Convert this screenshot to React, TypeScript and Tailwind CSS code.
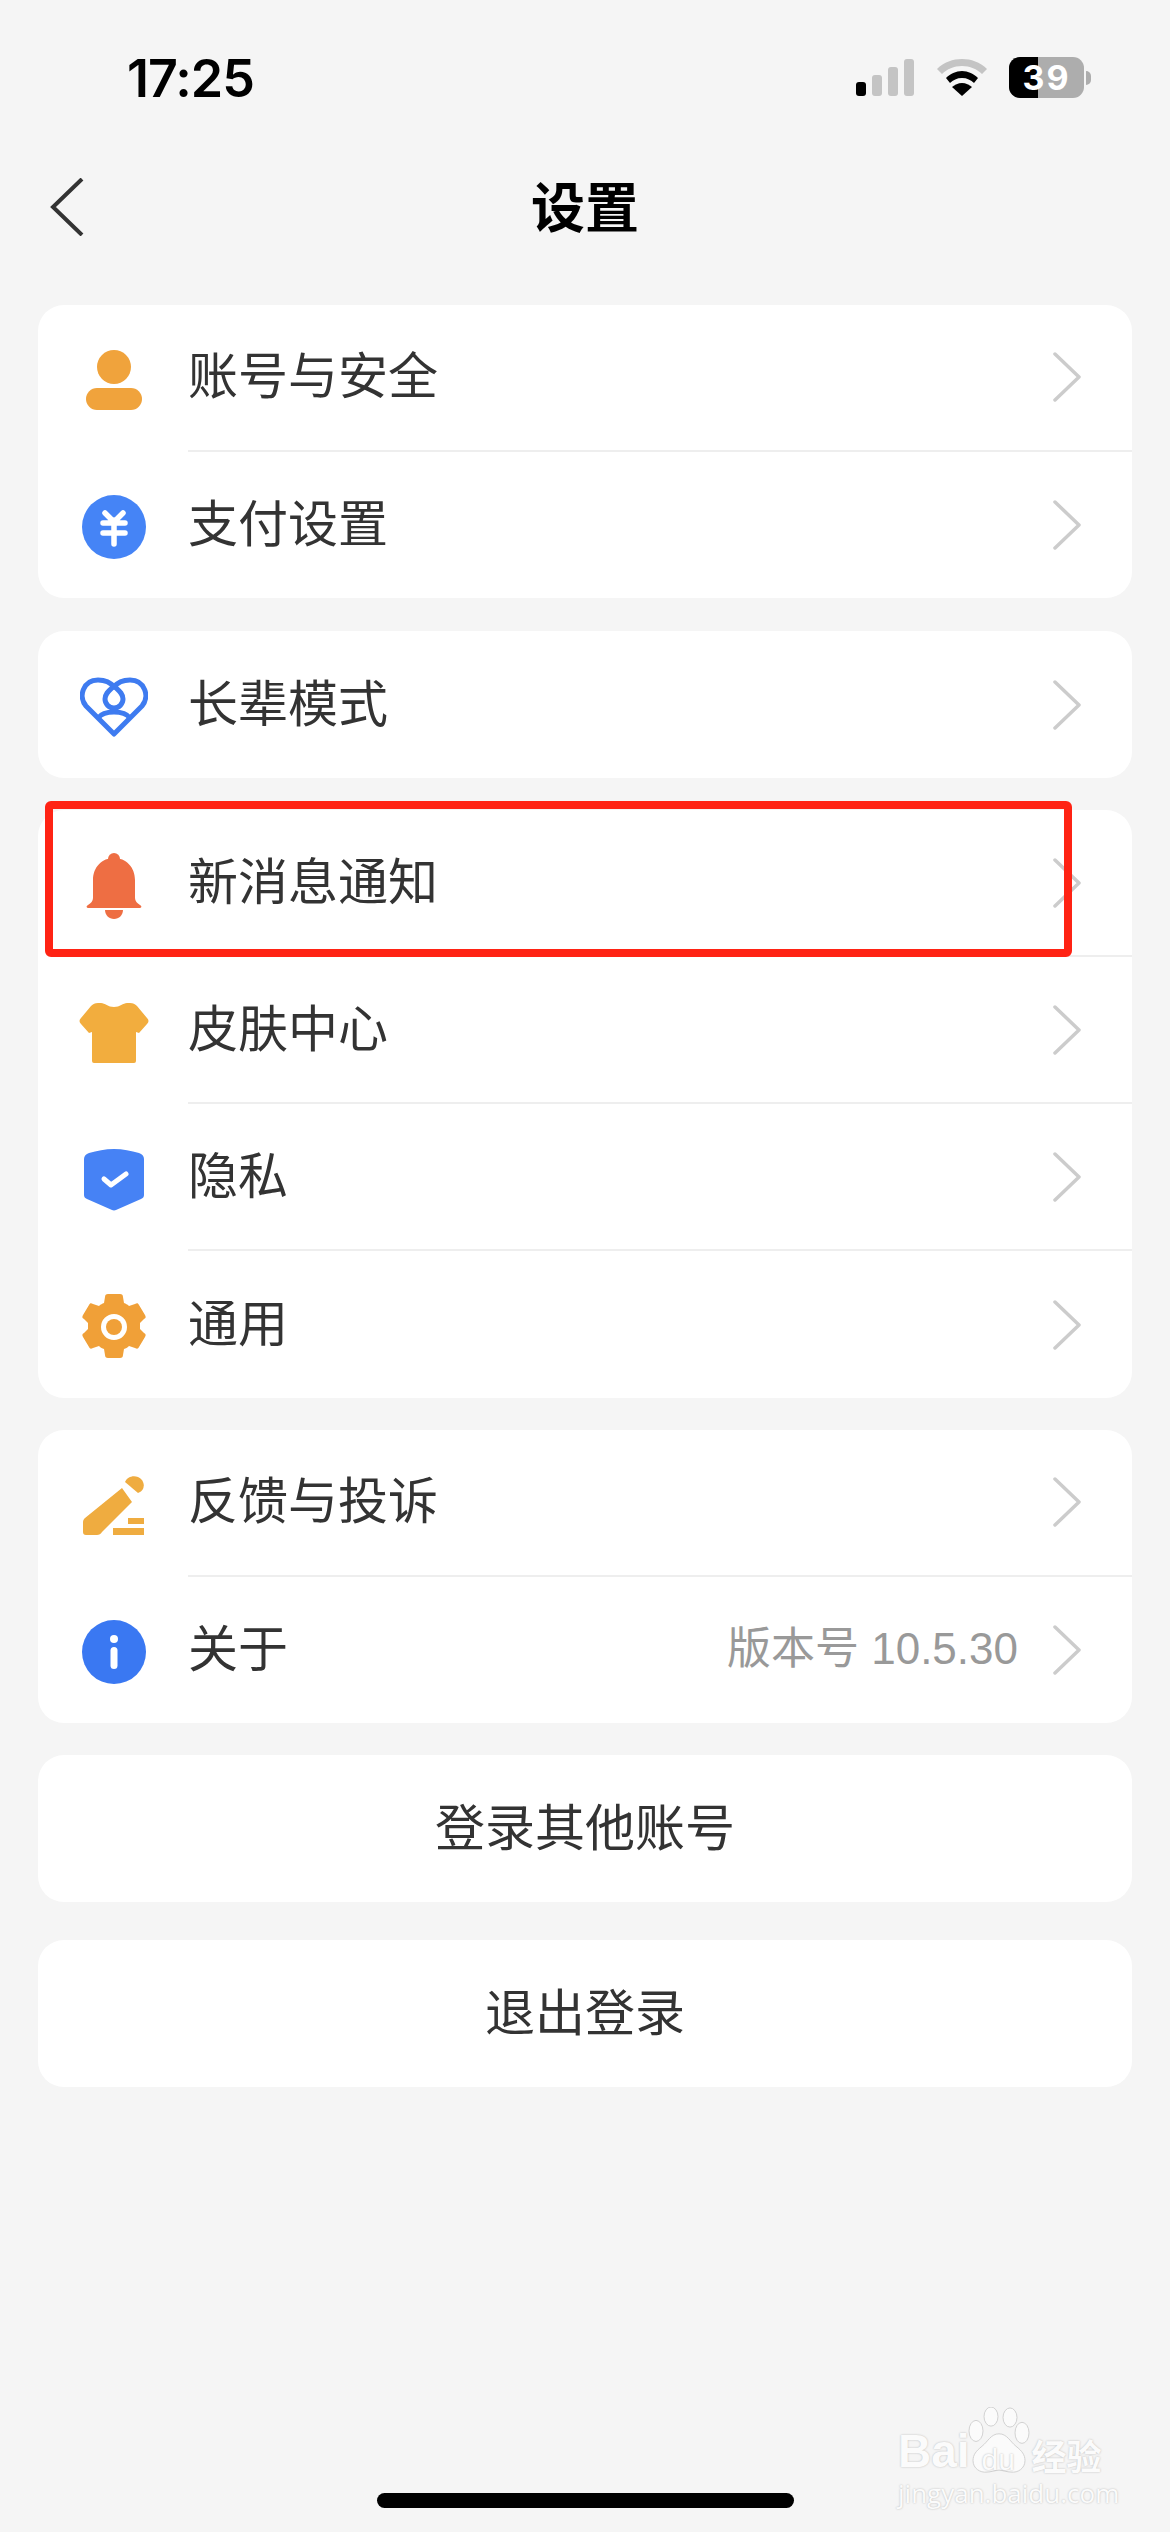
import type { ReactNode } from 'react';

const cjk = "font-['Noto_Sans_CJK_SC','Noto_Sans',sans-serif]";

function Chevron() {
  return (
    <svg width="29" height="50" viewBox="0 0 29 50" fill="none" className="shrink-0">
      <path d="M3 2l24 23L3 48" stroke="#cccccc" strokeWidth="3.5" strokeLinecap="round" strokeLinejoin="round" />
    </svg>
  );
}

function UserIcon() {
  return (
    <svg width="64" height="64" viewBox="0 0 64 64">
      <circle cx="32" cy="18" r="17" fill="#f0a33c" />
      <rect x="4" y="39" width="56" height="22" rx="11" fill="#f0a33c" />
    </svg>
  );
}

function YuanIcon() {
  return (
    <svg width="64" height="64" viewBox="0 0 64 64">
      <circle cx="32" cy="32" r="32" fill="#4584f6" />
      <path d="M23 18l6 6M41 18l-6 6M32 25v24M21 28h22M21 38h22" stroke="#fff" strokeWidth="5.500" strokeLinecap="round" fill="none" />
    </svg>
  );
}

function HeartIcon() {
  return (
    <svg width="68" height="60" viewBox="0 0 68 60" fill="none" stroke="#3e7bf0" strokeWidth="5">
      <path d="M34 57L6 29C-2 20 3 3 18 3c7 0 13 3 16 7 3-4 9-7 16-7 15 0 20 17 12 26z" strokeLinejoin="round" />
      <path d="M34 9c-4 4-9 7-9 13a9 9 0 0018 0c0-6-5-9-9-13z" />
      <path d="M18 41c3-4 9-6 16-6s13 2 16 6" />
    </svg>
  );
}

function BellIcon() {
  return (
    <svg width="56" height="66" viewBox="0 0 56 66" fill="#ee6e43">
      <circle cx="28" cy="6" r="6" />
      <path d="M28 5C16 5 7 14 7 27v18c0 3-2 5-5 7-2 1-2 3 1 3h50c3 0 3-2 1-3-3-2-5-4-5-7V27C49 14 40 5 28 5z" />
      <path d="M19 57h18c0 5-4 9-9 9s-9-4-9-9z" />
    </svg>
  );
}

function ShirtIcon() {
  return (
    <svg width="70" height="60" viewBox="0 0 70 60" fill="#f2ad3e">
      <path d="M22 0C26 0 29 4 35 4S44 0 48 0H51C54 0 56 1 58 3L68 15C70 17 70 19 68 21L60 30L57 29V58Q57 60 55 60H15Q13 60 13 58V29L10 30L2 21C0 19 0 17 2 15L12 3C14 1 16 0 19 0Z" />
    </svg>
  );
}

function ShieldIcon() {
  return (
    <svg width="60" height="62" viewBox="0 0 60 62">
      <path d="M30 0c9 0 17 2 25 4 3 1 5 3 5 6v36c0 2-1 3-3 4L32 61c-1 .5-3 .5-4 0L3 50c-2-1-3-2-3-4V10c0-3 2-5 5-6 8-2 16-4 25-4z" fill="#4682f5" />
      <path d="M20 30l7 6 15-11" fill="none" stroke="#fff" strokeWidth="5" strokeLinecap="round" strokeLinejoin="round" />
    </svg>
  );
}

function GearIcon() {
  return (
    <svg width="64" height="66" viewBox="0 0 64 66">
      <path
        fill="#f0a038"
        fillRule="evenodd"
        d="M23 3c0-2 1-3 3-3h12c2 0 3 1 3 3l1 6c2 1 3 1 5 3l6-2c2-1 3-1 4 1l6 10c1 2 1 3-1 4l-4 4v6l4 4c2 1 2 2 1 4l-6 10c-1 2-2 2-4 1l-6-2c-2 2-3 2-5 3l-1 6c0 2-1 3-3 3H26c-2 0-3-1-3-3l-1-6c-2-1-3-1-5-3l-6 2c-2 1-3 1-4-1L1 43c-1-2-1-3 1-4l4-4v-6l-4-4c-2-1-2-2-1-4l6-10c1-2 2-2 4-1l6 2c2-2 3-2 5-3zM32 20a13 13 0 100 26 13 13 0 000-26z"
      />
      <circle cx="32" cy="33" r="8" fill="#f0a038" />
    </svg>
  );
}

function PenIcon() {
  return (
    <svg width="62" height="60" viewBox="0 0 62 60" fill="#efac40">
      <path d="M39 12l10 14-30 30c-1 2-3 3-5 3H3c-2 0-3-1-3-3V46c0-2 1-3 2-4z" />
      <path d="M42 6c2-5 8-7 13-5s7 8 5 12c-1 2-3 3-5 4z" />
      <rect x="45" y="42" width="16" height="6" />
      <rect x="30" y="52" width="31" height="7" />
    </svg>
  );
}

function InfoIcon() {
  return (
    <svg width="64" height="64" viewBox="0 0 64 64">
      <circle cx="32" cy="32" r="32" fill="#3a78f2" />
      <circle cx="32" cy="19" r="4" fill="#fff" />
      <rect x="28.500" y="27" width="7" height="22" rx="3.500" fill="#fff" />
    </svg>
  );
}

function Row({ icon, label, value, divider }: { icon: ReactNode; label: string; value?: string; divider?: boolean }) {
  return (
    <div className="flex flex-1 items-stretch">
      <div className="flex w-[150px] shrink-0 items-center justify-center pl-px pt-[5px]">{icon}</div>
      <div className={`flex min-w-0 flex-1 items-center pr-[51px] ${divider ? 'border-b-2 border-[#eeeeee]' : ''}`}>
        <span className="flex-1 pb-[10px] text-[50px] leading-none text-[#333333]">{label}</span>
        {value && (
          <span className="mr-[34px] pb-[2px] font-['Liberation_Sans','Noto_Sans_CJK_SC',sans-serif] text-[44px] leading-none text-[#999999]">
            {value}
          </span>
        )}
        <Chevron />
      </div>
    </div>
  );
}

function Card({ children, className }: { children: ReactNode; className: string }) {
  return <div className={`flex flex-col overflow-hidden rounded-[26px] bg-white ${className}`}>{children}</div>;
}

function TextButton({ label }: { label: string }) {
  return (
    <div className="flex h-[147px] items-center justify-center rounded-[26px] bg-white pb-[10px] text-[50px] leading-none text-[#333333]">
      {label}
    </div>
  );
}

function Watermark() {
  const glow = '[text-shadow:0_0_2px_#b5b5b5]';
  return (
    <div className={`absolute left-[898px] top-[2407px] flex w-max flex-col text-[#fbfbfb] ${glow}`}>
      <div className="flex h-[67px] items-end">
        <span className="shrink-0 font-['Liberation_Sans',sans-serif] text-[46px] font-bold leading-[46px]">Bai</span>
        <div className="relative ml-[-2px] h-[67px] w-[62px] shrink-0">
          <svg width="62" height="67" viewBox="0 0 62 70" preserveAspectRatio="none" fill="#fbfbfb" stroke="#d0d0d0" strokeWidth="1">
            <ellipse cx="8" cy="25" rx="7" ry="11" />
            <ellipse cx="23" cy="10" rx="7" ry="10" />
            <ellipse cx="42" cy="11" rx="7" ry="10" />
            <ellipse cx="54" cy="27" rx="7" ry="11" />
            <path d="M31 28c8 0 11 8 17 13 6 5 9 9 9 15 0 8-7 13-14 12-4 0-8-2-12-2s-8 2-12 2C12 69 5 64 5 56c0-6 3-10 9-15 6-5 9-13 17-13z" />
          </svg>
          <span className="absolute left-[14px] top-[38px] font-['Liberation_Sans',sans-serif] text-[30px] leading-[30px]">du</span>
        </div>
        <span className={`${cjk} ml-[2px] shrink-0 whitespace-nowrap text-[35px] font-bold leading-[38px]`}>经验</span>
      </div>
      <span className="mt-[4px] whitespace-nowrap font-['Open_Sans',sans-serif] text-[26px] leading-[30px]">jingyan.baidu.com</span>
    </div>
  );
}

export default function App() {
  return (
    <div className={`relative h-[2532px] w-[1170px] overflow-hidden bg-[#f5f5f5] ${cjk}`}>
      {/* Status bar */}
      <div className="flex h-[154px] items-start justify-between pl-[127px] pr-[79px] pt-[50px]">
        <span className="font-['Inter',sans-serif] text-[52px] font-semibold leading-[58px] tracking-[-1px] text-black">17:25</span>
        <div className="mt-[7px] flex items-center">
          <svg width="58" height="37" viewBox="0 0 58 37" className="mr-[23px]">
            <rect x="0" y="23" width="10" height="14" rx="3" fill="#000" />
            <rect x="16" y="16" width="10" height="21" rx="3" fill="#c4c4c4" />
            <rect x="32" y="8" width="10" height="29" rx="3" fill="#c4c4c4" />
            <rect x="48" y="0" width="10" height="37" rx="3" fill="#c4c4c4" />
          </svg>
          <svg width="50" height="37" viewBox="0 0 50 37" className="mr-[22px]">
            <path d="M0 10C7 3 16 0 25 0s18 3 25 10l-5 5c-5-5-12-8-20-8S10 10 5 15z" fill="#c4c4c4" />
            <path d="M9 19c4-4 10-7 16-7s12 3 16 7l-4 5c-3-3-7-5-12-5s-9 2-12 5z" fill="#000" />
            <path d="M15 28c3-2 6-4 10-4s7 2 10 4L25 37z" fill="#000" />
          </svg>
          <div className="relative flex h-[41px] w-[75px] items-center justify-center overflow-hidden rounded-[11px] bg-[#adadad] font-['Inter',sans-serif] text-[34px] font-bold tracking-[2px] text-white">
            <div className="absolute inset-y-0 left-0 w-[29px] bg-black" />
            <span className="relative">39</span>
          </div>
          <div className="ml-[2px] h-[14px] w-[5px] rounded-r-full bg-[#adadad]" />
        </div>
      </div>

      {/* Nav bar */}
      <div className="relative flex h-[108px] items-center justify-center pb-[6px]">
        <svg width="34" height="58" viewBox="0 0 34 58" fill="none" className="absolute left-[50px] top-[24px]">
          <path d="M32 1L3 29l29 28" stroke="#333333" strokeWidth="4" />
        </svg>
        <span className="text-[54px] font-bold leading-none text-black">设置</span>
      </div>

      {/* Settings list */}
      <div className="mt-[43px] flex flex-col gap-[32px] px-[38px]">
        <Card className="mb-px h-[293px]">
          <Row icon={<UserIcon />} label="账号与安全" divider />
          <Row icon={<YuanIcon />} label="支付设置" />
        </Card>
        <Card className="h-[147px]">
          <Row icon={<HeartIcon />} label="长辈模式" />
        </Card>
        <Card className="h-[588px]">
          <Row icon={<BellIcon />} label="新消息通知" divider />
          <Row icon={<ShirtIcon />} label="皮肤中心" divider />
          <Row icon={<ShieldIcon />} label="隐私" divider />
          <Row icon={<GearIcon />} label="通用" />
        </Card>
        <Card className="h-[293px]">
          <Row icon={<PenIcon />} label="反馈与投诉" divider />
          <Row icon={<InfoIcon />} label="关于" value="版本号 10.5.30" />
        </Card>
        <TextButton label="登录其他账号" />
        <div className="mt-[6px]">
          <TextButton label="退出登录" />
        </div>
      </div>

      {/* Red highlight drawn over the notification row */}
      <div className="absolute left-[45px] top-[801px] h-[156px] w-[1027px] rounded-[6px] border-[8px] border-[#ff2314]" />

      <Watermark />

      {/* Home indicator */}
      <div className="absolute bottom-[24px] left-[377px] h-[15px] w-[417px] rounded-full bg-black" />
    </div>
  );
}
